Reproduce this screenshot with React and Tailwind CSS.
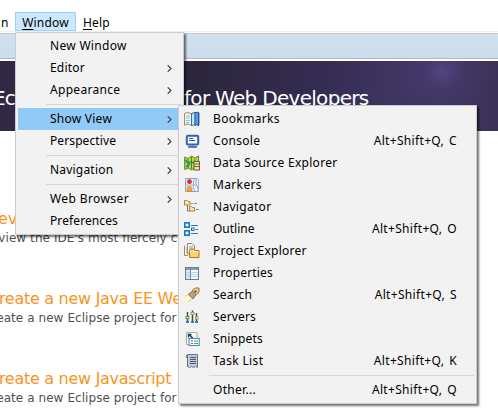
import React from "react";

const icons = {
  bookmarks: (
    <>
      <path d="M.5 2.5 3 1.5l4 1 1 1v11L4 13l-3.5 1z" fill="#edf3f4" stroke="#a09358" />
      <path d="M2 5h4M2 7h3.5M2 9.5h4M2 11.5h3" stroke="#98bfd2" />
      <path d="m7.5 2.5 3-1 4.5.3V14L12 13l-4.5 1.5z" fill="#58aaf0" stroke="#426c9b" />
      <path d="M8 3.5 10.5 2v11L8 14z" fill="#c8e4fa" />
      <path d="m11 1.5 3.5-.2V15L12.8 13.5 11 15z" fill="#4aa1ee" stroke="#225690" strokeWidth=".9" />
    </>
  ),
  console: (
    <>
      <rect x="2.8" y="2.8" width="11.4" height="8.7" rx="1" fill="#f4faff" stroke="#3564a5" strokeWidth="2" />
      <path d="M5 5.5h4M5 7.5h6" stroke="#315789" />
      <path d="M6 12.5h5v1H6z" fill="#5a86bd" />
      <path d="M4 14h9" stroke="#3564a5" strokeWidth="1.6" />
    </>
  ),
  data: (
    <>
      <path d="m.7 2 3.5 1.5L7.5 1l3.3 2L14.5 1v13L11 12.5 7.5 15l-3.3-2L.7 14.5z" fill="#b4dd3b" stroke="#5f8429" />
      <path d="M4 4v9M7.5 2v12M11 4v8" stroke="#527d27" />
      <path d="m1 5 3 3 3-1 3 1M2 12l4-3" stroke="#168a7e" strokeWidth="1.5" />
      <rect x="10" y="6.5" width="5.5" height="8.5" fill="#f2e2b1" stroke="#6f6131" />
      <path d="M10 9h5.5M10 11.5h5.5" stroke="#6f6131" />
    </>
  ),
  markers: (
    <>
      <path d="M1.5 1.5h11.8c-2 3-1.8 4.5-.8 6.5s1.8 3.5 1.8 6.5H1.5z" fill="#e9f1fb" stroke="#8da1bd" />
      <path d="M1 8h11" stroke="#a4b4ce" />
      <path d="M10 2c-1 4-1 8 .5 12M14.5 2v13" stroke="#a0b1cc" />
      <circle cx="5.5" cy="4.7" r="2.4" fill="#dd2631" />
      <path d="M3 14c0-5 1-4.5 2.5-4.5S8 9 8 14z" fill="#f8ab23" stroke="#d28913" strokeWidth=".7" />
    </>
  ),
  navigator: (
    <>
      <path d="M3.5 6v6H6" stroke="#5f7fa8" />
      <path d="M.5 1.5h2.7l1 1H6V6H.5zM5.5 7.5h2l1 1h2V12h-5z" fill="#fde5a2" stroke="#b57d33" />
      <path d="M7 4.5h2M10 4.5h3M12 10.5h3" stroke="#6f94bd" />
    </>
  ),
  outline: (
    <>
      <rect x=".8" y="1.8" width="4.4" height="4.4" fill="#eaf8ff" stroke="#1679c2" strokeWidth="1.6" />
      <rect x=".8" y="9.8" width="4.4" height="4.4" fill="#eaf8ff" stroke="#1679c2" strokeWidth="1.6" />
      <rect x="7.5" y="7" width="2.5" height="2.5" fill="#d2efff" stroke="#1679c2" />
      <path d="M7 4.5h7M11.5 8.5H14M7 12.5h7" stroke="#2f77ac" strokeWidth="1.2" />
    </>
  ),
  project: (
    <>
      <path d="M.5 2.5v10H4M3.5.5H8L10.5 3v8h-7V.5z" fill="#f2f4ef" stroke="#9b8a61" />
      <path d="M5 4h4M5 6h4M2 5h1M2 7h1M2 9h1" stroke="#829fba" />
      <path d="M5.5 7.5 7 6h3l1 1.5h4v7h-9.5z" fill="#f8d46a" stroke="#b77524" />
      <path d="M6 8.8h8.5" stroke="#ffedaa" />
    </>
  ),
  properties: (
    <>
      <rect x="1.5" y="2.5" width="13" height="12" fill="#f6fbff" stroke="#697e9f" />
      <path d="M2 3h12v2H2z" fill="#8799b5" />
      <path d="M2 5h4v9H2z" fill="#dce5f1" />
      <path d="M2 7.5h12M2 9.5h12M2 11.5h12" stroke="#c5d1e3" />
      <path d="M6.5 3v11" stroke="#788baa" />
    </>
  ),
  search: (
    <>
      <path d="M0 10 5 6.5l4 4L4 15H1z" fill="#fff6c8" />
      <path d="m1 9.5 4.5-3 4 4L4 15" stroke="#e0c69b" />
      <path d="M4.5 7.5 9 3.5l3.5 3.5L9 12z" fill="#bb9d83" stroke="#8f6b50" />
      <path d="m8.5 3 3-2h3.5v4l-2.5 3-4-4z" fill="#f6cf79" stroke="#a86f3b" />
      <circle cx="11.5" cy="4.5" r="1.2" fill="#426994" />
    </>
  ),
  servers: (
    <>
      <path d="M3.5 3v11M8.5 1.5V14M12.5 4v10" stroke="#294b70" strokeWidth="1.4" />
      <path d="M1.5 8.5h4" stroke="#579c3d" strokeWidth="3" />
      <path d="M6.5 4.5h4M11 9h3.5" stroke="#b29b32" strokeWidth="3" />
      <path d="M2.5 8.5h2M7.5 4.5h2M12 9h2" stroke="#fff6ae" />
      <path d="M2 13h3M7 13h3M11 13h3" stroke="#3f79b0" strokeWidth="2" />
    </>
  ),
  snippets: (
    <>
      <path d="M2.5 1.5H13v12H2.5z" fill="#f6faf9" stroke="#b5ab82" />
      <path d="M9 7.5 5 3.5M4.5 6.5V3.5h3" stroke="#173e68" strokeWidth="1.4" />
      <rect x="5" y="7.5" width="10.2" height="7" fill="#f7fcff" stroke="#378ebc" />
      <path d="M7 10h2M7 12.5h2" stroke="#db3c47" />
      <path d="M10 10h4M10 12.5h4" stroke="#54a176" />
    </>
  ),
  task: (
    <>
      <path d="M3.5 1.5h10v13l-2-1-2 1-2-1-2 1-2-1z" fill="#c3c8d9" stroke="#6d7187" />
      <path d="M6 4.5h6M6 6.5h6M6 8.5h6M6 10.5h6" stroke="#51566e" />
      <path d="M2.5 2v3" stroke="#777b92" />
    </>
  ),
};

function Icon({ name }) {
  return <svg className="h-4 w-4 shrink-0" viewBox="0 0 16 16" fill="none">{icons[name]}</svg>;
}

function Chevron() {
  return (
    <svg className="h-[7px] w-[5px]" viewBox="0 0 5 7" fill="none">
      <path d="M.7.3 4 3.5.7 6.7" stroke="#404040" strokeWidth="1.15" />
    </svg>
  );
}

const mainItems = [
  ["New Window", false, "tracking-[0.3px]"],
  ["Editor", true, "tracking-[0.2px]"],
  ["Appearance", true, "tracking-[0.3px]"],
  null,
  ["Show View", true, "tracking-[0.25px]"],
  ["Perspective", true, "tracking-[0.1px]"],
  null,
  ["Navigation", true, "tracking-[0.2px]"],
  null,
  ["Web Browser", true, "tracking-[0.4px]"],
  ["Preferences", false, "tracking-[0.1px]"],
];

const viewItems = [
  ["bookmarks", "Bookmarks", "", "tracking-[0.35px]"],
  ["console", "Console", "Alt+Shift+Q, C", "tracking-[0.3px]"],
  ["data", "Data Source Explorer", "", "tracking-[0.3px]"],
  ["markers", "Markers", "", "tracking-[0.35px]"],
  ["navigator", "Navigator", "", "tracking-[0.3px]"],
  ["outline", "Outline", "Alt+Shift+Q, O", ""],
  ["project", "Project Explorer", "", "tracking-[0.27px]"],
  ["properties", "Properties", "", "tracking-[0.15px]"],
  ["search", "Search", "Alt+Shift+Q, S", "tracking-[0.2px]"],
  ["servers", "Servers", "", "tracking-[0.15px]"],
  ["snippets", "Snippets", "", "tracking-[0.15px]"],
  ["task", "Task List", "Alt+Shift+Q, K", "tracking-[0.35px]"],
  null,
  ["", "Other...", "Alt+Shift+Q, Q", "tracking-[0.3px]"],
];

function Separator() {
  return <div className="flex h-[7px] items-center pl-7"><div className="h-px w-full bg-[#d7d7d7]" /></div>;
}

function WindowMenu() {
  return (
    <div className="absolute left-[15px] top-8 h-[203px] w-[169px] border border-[#cccccc] bg-[#f2f2f2] p-[2px] shadow-[2px_2px_2px_rgba(0,0,0,0.55)]">
      {mainItems.map((item, i) =>
        item ? (
          <div key={i} className={`flex h-[22px] items-center justify-between pl-8 pr-[9px] ${item[0] === "Show View" ? "bg-[#91c9f7]" : ""}`}>
            <span className={item[2]}>{item[0]}</span>
            {item[1] && <Chevron />}
          </div>
        ) : (
          <Separator key={i} />
        )
      )}
    </div>
  );
}

function ViewMenu() {
  return (
    <div className="absolute left-[178px] top-[105px] h-[299px] w-[299px] border border-[#cccccc] bg-[#f2f2f2] p-[2px] shadow-[2px_2px_2px_rgba(0,0,0,0.55)]">
      {viewItems.map((item, i) =>
        item ? (
          <div key={i} className="flex h-[22px] items-center pl-[3px] pr-[17px]">
            <div className="w-[29px] shrink-0">{item[0] && <Icon name={item[0]} />}</div>
            <span className={item[3]}>{item[1]}</span>
            <span className="ml-auto tracking-[0.33px] [word-spacing:1.5px]">{item[2]}</span>
          </div>
        ) : (
          <Separator key={i} />
        )
      )}
    </div>
  );
}

function Entry({ title, children }) {
  return (
    <section className="h-20 w-[184px] overflow-hidden whitespace-nowrap font-['DejaVu_Sans',sans-serif]">
      <h2 className="-ml-[12px] h-[21px] text-[16px] leading-5 tracking-[-0.28px] text-[#f7941e]">{title}</h2>
      <p className="-ml-[17px] text-[12px] leading-[17px] tracking-[0.07px] text-[#505050]">{children}</p>
    </section>
  );
}

export default function App() {
  return (
    <div className="relative h-[420px] w-[498px] overflow-hidden bg-white font-['Noto_Sans',sans-serif] text-[12px] text-black">
      <nav className="flex h-8 items-end border-b border-[#f0f0f0] whitespace-nowrap">
        <div className="flex h-[19px] w-[15px] items-center pl-px pt-0.5">n</div>
        <div className="flex h-[19px] w-[61px] items-center justify-center border border-[#99d1ff] bg-[#cce8ff] pt-0.5"><span className="tracking-[0.2px]"><u className="underline-offset-2">W</u>indow</span></div>
        <div className="flex h-[19px] items-center pl-[7px] pt-0.5"><span className="tracking-[0.2px]"><u className="underline-offset-2">H</u>elp</span></div>
      </nav>
      <div className="mt-px h-[26px] border-y border-t-[#c6c6c6] border-b-[#a9bad0] bg-[linear-gradient(#d2e1ef,#cbdcec)]" />
      <header className="mt-0.5 h-[70px] bg-[radial-gradient(circle_at_442px_10px,rgba(86,74,138,0.8)_0px,rgba(78,66,125,0.35)_18px,transparent_50px),linear-gradient(90deg,#302946,#2b263c_40%,#352d53_65%,#3f3562_80%,#3c3259)] pt-[25px]">
        <h1 className="flex whitespace-nowrap font-['DejaVu_Sans',sans-serif] text-[20px] leading-6 text-white">
          <span className="-ml-[7px] w-[191px] shrink-0 tracking-[-0.8px]">Eclipse Java EE IDE</span>
          <span className="tracking-[-0.7px]">for Web Developers</span>
        </h1>
      </header>
      <main className="pt-[78px]">
        <Entry title="Review IDE configuration">Review the IDE's most fiercely c</Entry>
        <Entry title="Create a new Java EE We">Create a new Eclipse project for</Entry>
        <Entry title="Create a new Javascript">Create a new Eclipse project for</Entry>
      </main>
      <WindowMenu />
      <ViewMenu />
    </div>
  );
}
